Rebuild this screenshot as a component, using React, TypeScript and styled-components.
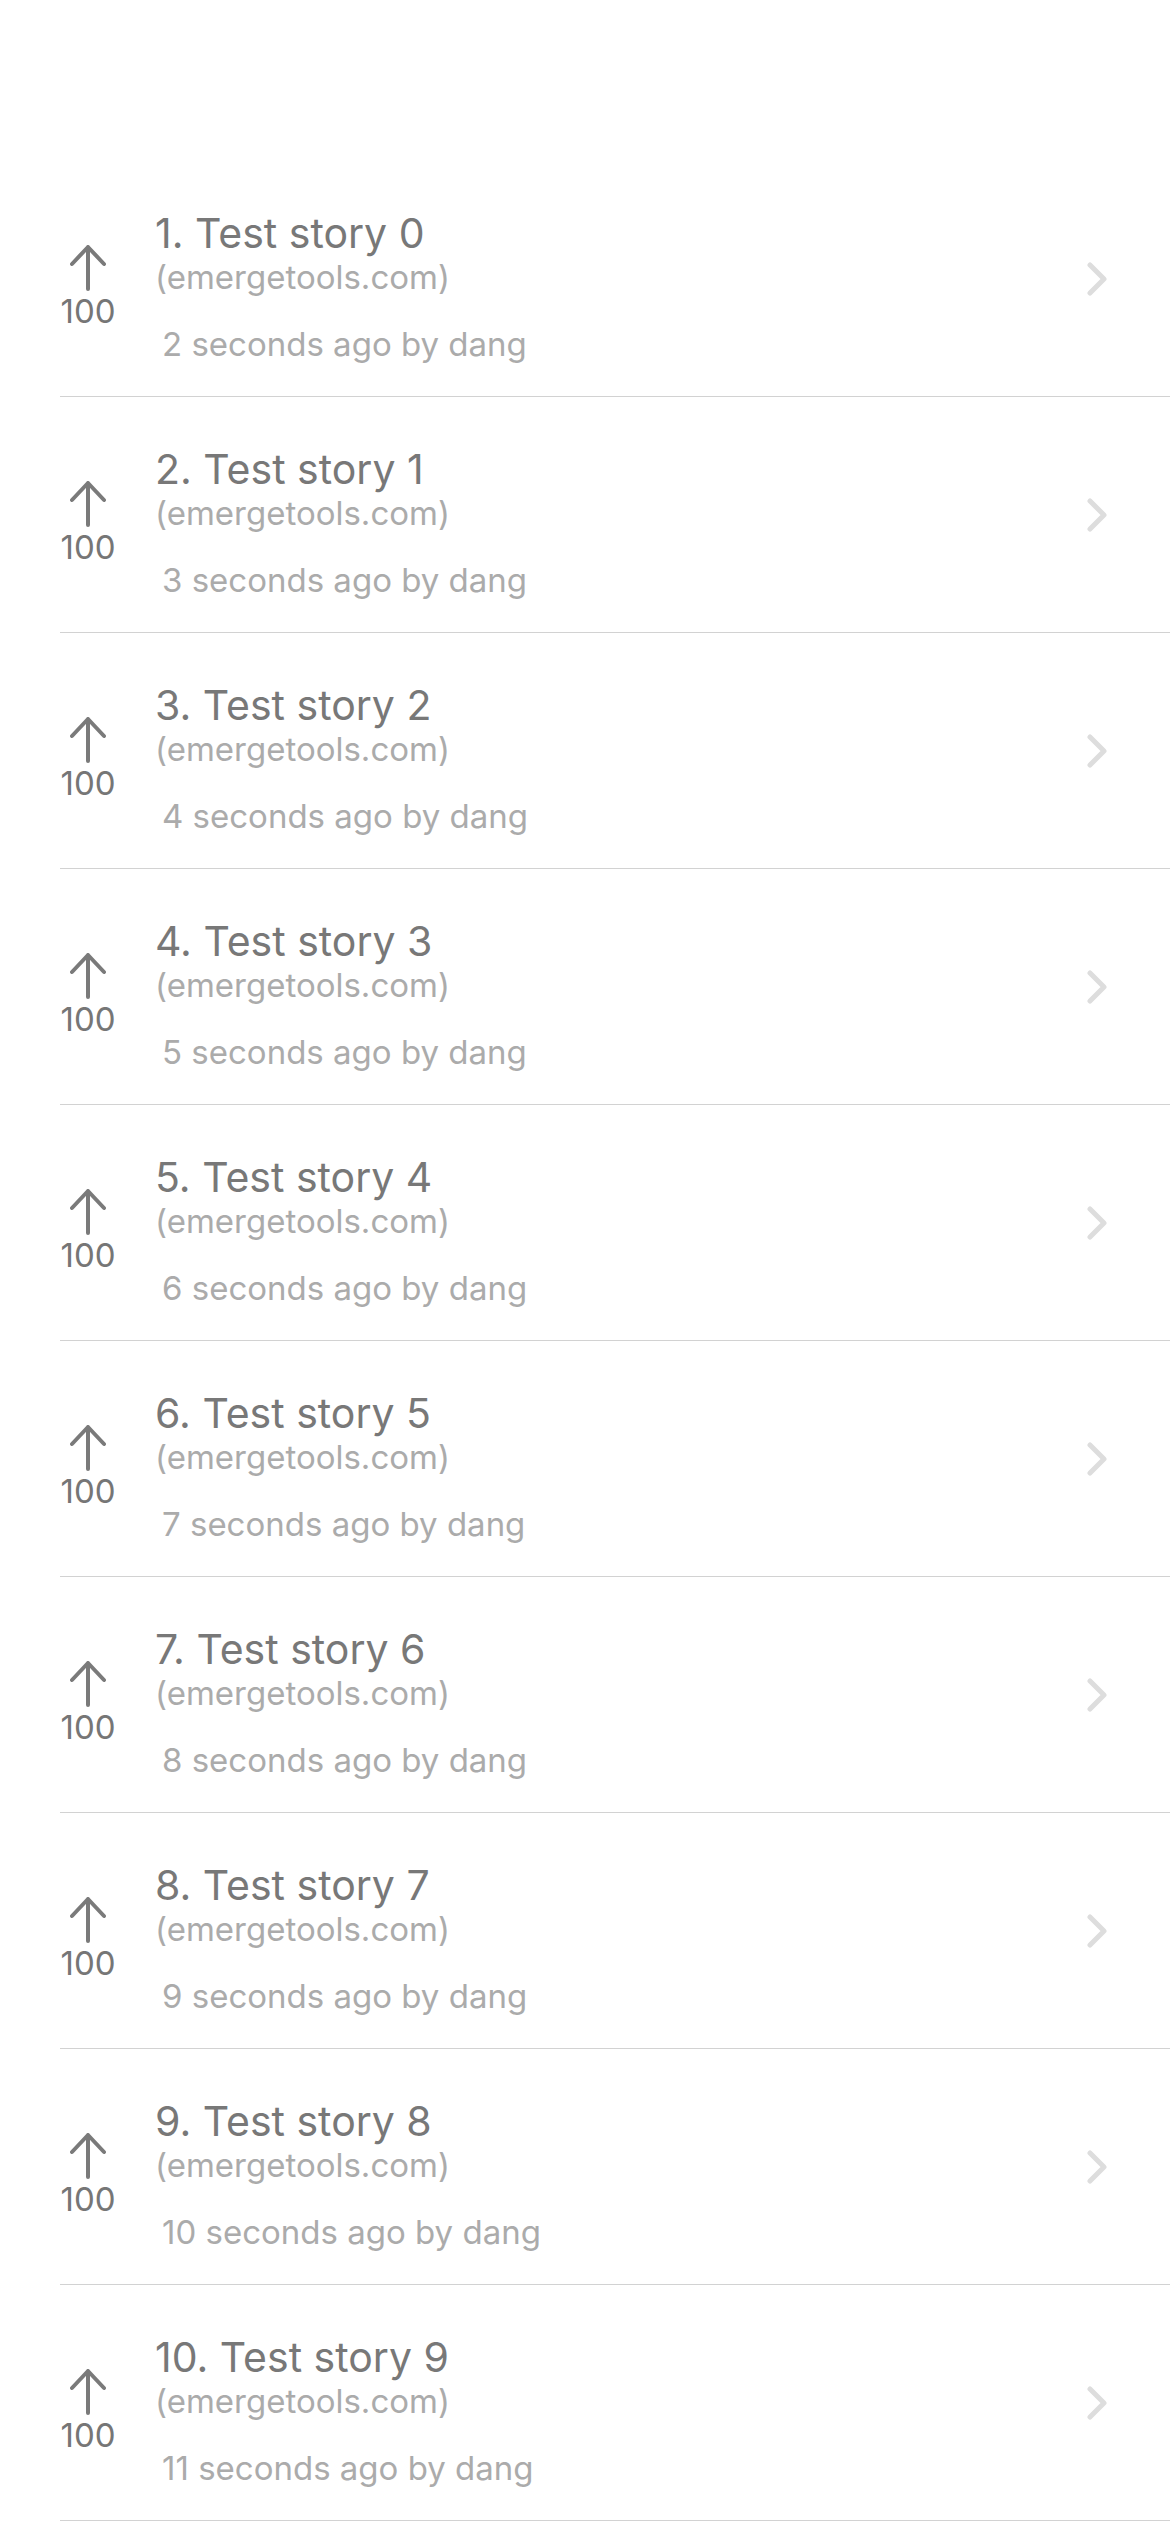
import React from 'react';
import styled, { createGlobalStyle } from 'styled-components';

const GlobalStyle = createGlobalStyle`
  html, body {
    margin: 0;
    padding: 0;
    background: #ffffff;
  }
  body {
    font-family: Inter, "Noto Sans", "Liberation Sans", sans-serif;
  }
`;

const Page = styled.div`
  width: 1170px;
  min-height: 2532px;
  padding-top: 161px;
  box-sizing: border-box;
  background: #ffffff;
`;

const List = styled.ul`
  margin: 0;
  padding: 0;
  list-style: none;
`;

const Row = styled.li`
  display: flex;
  align-items: center;
  height: 235px;
  margin-left: 60px;
  padding-right: 63px;
  border-bottom: 1.5px solid #d2d2d2;
`;

const Vote = styled.div`
  width: 56px;
  margin-top: 17px;
  display: flex;
  flex-direction: column;
  align-items: center;
  color: #767676;
`;

const Score = styled.span`
  font-size: 33px;
  line-height: 38px;
  margin-top: 1px;
`;

const Body = styled.div`
  flex: 1;
  margin-left: 39px;
  padding-top: 15px;
  display: flex;
  flex-direction: column;
`;

const Title = styled.span`
  font-size: 41px;
  line-height: 48px;
  color: #787878;
`;

const Domain = styled.span`
  margin-top: 1px;
  font-size: 33px;
  line-height: 38px;
  color: #ababab;
`;

const Meta = styled.span`
  margin-top: 29px;
  padding-left: 7px;
  font-size: 33px;
  line-height: 38px;
  color: #ababab;
`;

const UpArrow = () => (
  <svg width="40" height="46" viewBox="0 0 40 46" fill="none">
    <path
      d="M20 2 V44 M4 19 L20 2 L36 19"
      stroke="#7a7a7a"
      strokeWidth="4"
      strokeLinecap="round"
      strokeLinejoin="round"
    />
  </svg>
);

const Chevron = () => (
  <svg width="20" height="34" viewBox="0 0 20 34" fill="none">
    <path
      d="M3 3 L17 17 L3 31"
      stroke="#dddddd"
      strokeWidth="5"
      strokeLinecap="round"
      strokeLinejoin="round"
    />
  </svg>
);

const stories = Array.from({ length: 10 }, (_, i) => ({
  id: i,
  title: `${i + 1}. Test story ${i}`,
  domain: 'emergetools.com',
  score: 100,
  age: `${i + 2} seconds ago`,
  by: 'dang',
}));

const App: React.FC = () => (
  <Page>
    <GlobalStyle />
    <List>
      {stories.map(story => (
        <Row key={story.id}>
          <Vote>
            <UpArrow />
            <Score>{story.score}</Score>
          </Vote>
          <Body>
            <Title>{story.title}</Title>
            <Domain>({story.domain})</Domain>
            <Meta>
              {story.age} by {story.by}
            </Meta>
          </Body>
          <Chevron />
        </Row>
      ))}
    </List>
  </Page>
);

export default App;
